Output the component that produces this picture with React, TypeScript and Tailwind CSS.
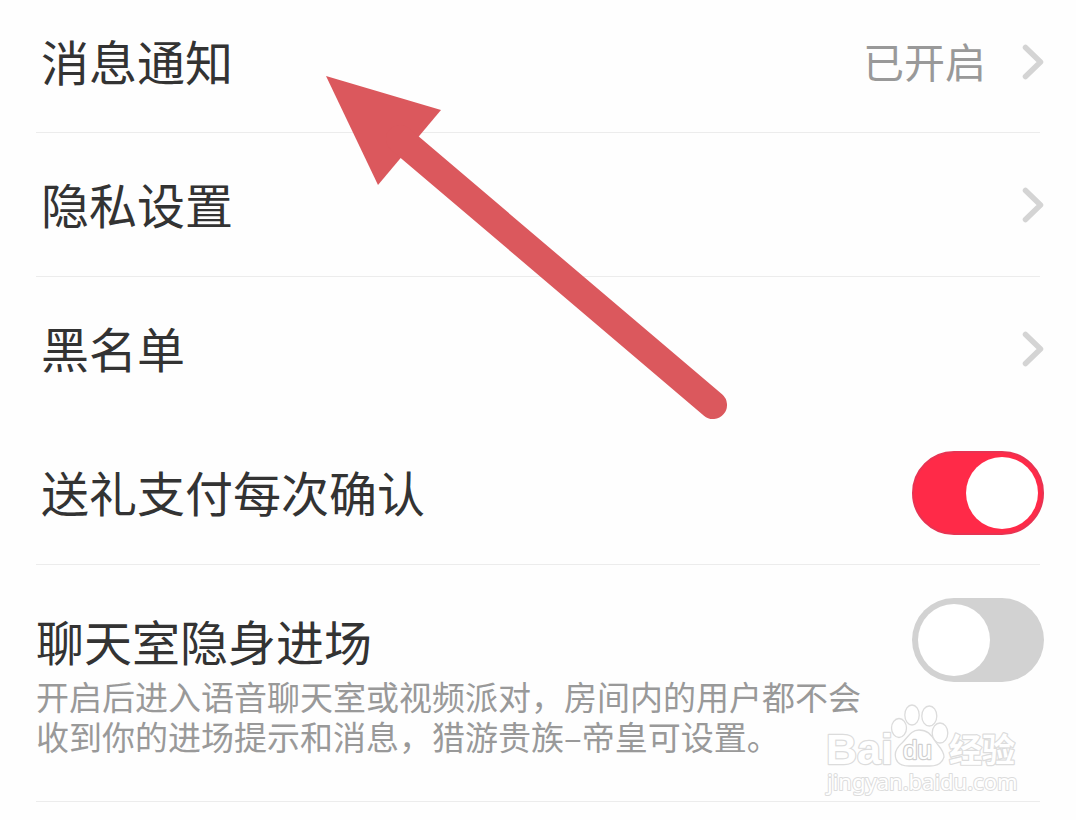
import { useState } from "react";
import type { ReactNode } from "react";

export default function App() {
  const [confirmGift, setConfirmGift] = useState(true);
  const [stealth, setStealth] = useState(false);

  return (
    <div className="relative min-h-screen overflow-hidden bg-[#fefefe] px-8 font-['Noto_Sans_CJK_SC',sans-serif] text-[#333333]">
      <main>
        <LinkRow label="消息通知" value="已开启" height="h-[132px] pb-2" />
        <Divider />
        <LinkRow label="隐私设置" height="h-[143px]" />
        <Divider />
        <LinkRow label="黑名单" height="h-36" />

        <section className="flex h-[143px] items-center justify-between pl-[9px]">
          <label htmlFor="confirm-gift" className="pb-1 text-5xl leading-none">
            送礼支付每次确认
          </label>
          <Switch id="confirm-gift" checked={confirmGift} onChange={setConfirmGift} />
        </section>
        <Divider />

        <section className="flex items-start justify-between pt-[33px] pb-[45px] pl-1">
          <div className="pt-[18px]">
            <label htmlFor="stealth" className="block text-5xl leading-none">
              聊天室隐身进场
            </label>
            <p className="mt-3 max-w-[840px] text-[33px] leading-10 text-[#999999]">
              开启后进入语音聊天室或视频派对，房间内的用户都不会
              <br />
              收到你的进场提示和消息，猎游贵族–帝皇可设置。
            </p>
          </div>
          <Switch id="stealth" checked={stealth} onChange={setStealth} />
        </section>
        <Divider />
      </main>

      <Arrow />
      <Watermark />
    </div>
  );
}

function LinkRow({ label, value, height }: { label: string; value?: string; height: string }) {
  return (
    <button
      type="button"
      className={`flex w-full items-center justify-between pl-[9px] text-left ${height}`}
    >
      <span className="pb-1 text-5xl leading-none">{label}</span>
      <Trailing>{value}</Trailing>
    </button>
  );
}

function Trailing({ children }: { children?: ReactNode }) {
  return (
    <span className="flex items-center gap-9">
      {children && <span className="pb-1 text-[41px] leading-none text-[#999999]">{children}</span>}
      <svg width="22" height="36" viewBox="0 0 22 36" fill="none" aria-hidden="true">
        <path d="M3.500 3.500 18.500 18 3.500 32.500" stroke="#d4d4d4" strokeWidth="5.500" strokeLinecap="round" strokeLinejoin="round" />
      </svg>
    </span>
  );
}

function Divider() {
  return <hr className="mx-1 border-t border-[#ececec]" />;
}

function Switch({
  id,
  checked,
  onChange,
}: {
  id: string;
  checked: boolean;
  onChange: (value: boolean) => void;
}) {
  return (
    <input
      id={id}
      type="checkbox"
      role="switch"
      checked={checked}
      onChange={(e) => onChange(e.target.checked)}
      className="flex h-[84px] w-[132px] shrink-0 cursor-pointer appearance-none items-center rounded-full bg-[#d2d2d2] px-[6px] before:size-[72px] before:rounded-full before:bg-white checked:justify-end checked:border-2 checked:border-[#e83352] checked:bg-[#ff2a48] checked:px-1"
    />
  );
}

function Arrow() {
  return (
    <svg
      className="pointer-events-none absolute top-[76px] left-[326px]"
      width="402"
      height="344"
      viewBox="326 76 402 344"
      aria-hidden="true"
    >
      <path d="M326 76 441 110 378 185Z" fill="#db585d" />
      <path d="M400 139 713 405" stroke="#db585d" strokeWidth="28" strokeLinecap="round" />
    </svg>
  );
}

function Watermark() {
  return (
    <svg
      className="pointer-events-none absolute top-[698px] left-[820px]"
      width="204"
      height="104"
      viewBox="820 698 204 104"
      fill="#ffffff"
      stroke="#dcdcdc"
      strokeWidth="1.3"
      strokeLinejoin="round"
      aria-label="Baidu 经验"
    >
      <text
        x="826"
        y="764"
        strokeWidth="2.400"
        paintOrder="stroke"
        className="font-['Liberation_Sans',sans-serif] text-[43px] font-bold"
      >
        Bai
      </text>
      <ellipse cx="899" cy="728" rx="7.5" ry="9.5" />
      <ellipse cx="912" cy="715" rx="7.2" ry="10" />
      <ellipse cx="929.3" cy="716" rx="7.5" ry="10" />
      <ellipse cx="940" cy="733" rx="7.8" ry="10" />
      <path d="M919 730C911 730 908 737 902 743C896 748 894 753 896 759C898 765 903 766 909 766C915 766 924 766 930 766C937 766 942 764 944 757C944 750 939 747 935 741C931 734 927 730 919 730Z" />
      <text
        x="903"
        y="759"
        stroke="#cfcfcf"
        strokeWidth="2.400"
        paintOrder="stroke"
        className="font-['Liberation_Sans',sans-serif] text-[26px]"
      >
        du
      </text>
      <text
        x="949"
        y="762"
        strokeWidth="2.400"
        paintOrder="stroke"
        className="font-['Noto_Sans_CJK_SC',sans-serif] text-[33px] font-bold"
      >
        经验
      </text>
      <text
        x="827"
        y="790"
        strokeWidth="2"
        paintOrder="stroke"
        className="font-['Noto_Sans',sans-serif] text-[22px]"
      >
        jingyan.baidu.com
      </text>
    </svg>
  );
}
